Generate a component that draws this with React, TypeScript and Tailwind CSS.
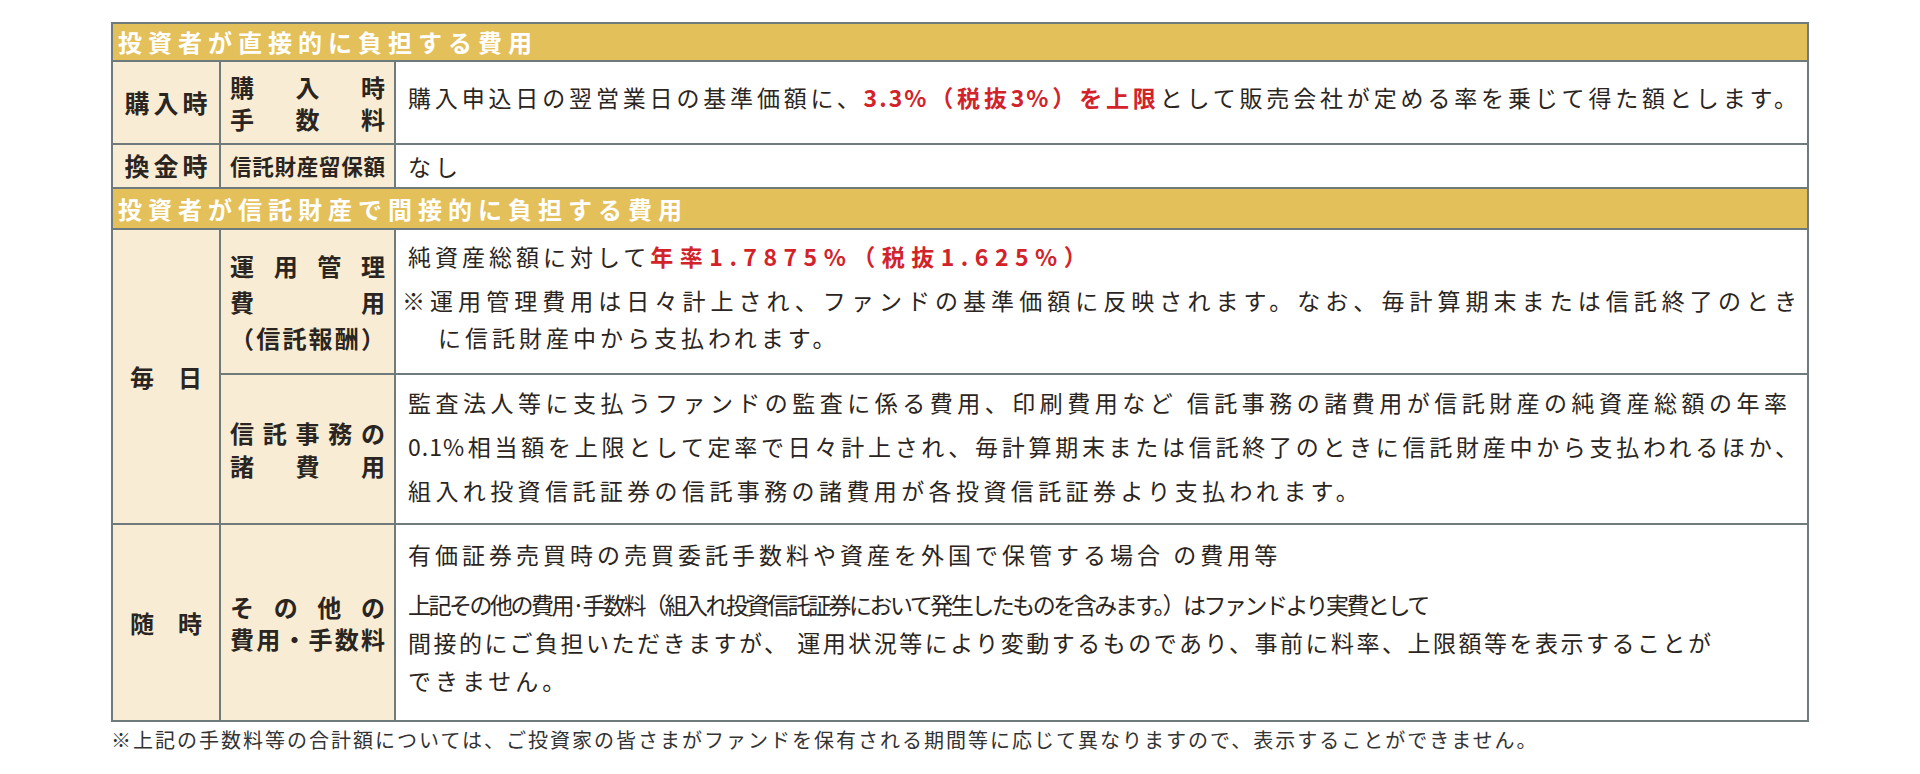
import React from "react"

const font = "font-['Noto_Sans_CJK_JP','Noto_Sans_CJK_SC',sans-serif]"

export default function App() {
  return (
    <div className={`w-[1920px] h-[774px] overflow-hidden bg-white pt-[22px] pl-[111px] text-[#2b2521] ${font}`}>
      <div className="grid w-[1698px] grid-cols-[106px_173px_1fr] grid-rows-[36px_81px_42px_39px_143px_148px_195px] gap-[2px] bg-[#6e7a7b] p-[2px]">
        {/* header 1 */}
        <div className="col-span-3 flex items-center bg-[#e4c05a] pl-[5px] text-[24px] font-semibold tracking-[6px] text-white">
          投資者が直接的に負担する費用
        </div>

        {/* 購入時 */}
        <div className="flex items-center justify-center bg-[#f8edd4] pl-[4px] text-[25px] font-bold tracking-[4px]">購入時</div>
        <div className="flex flex-col justify-center bg-[#f8edd4] px-[9px] text-[24px] font-bold leading-[32px]">
          <div className="text-justify [text-align-last:justify]">購入時</div>
          <div className="text-justify [text-align-last:justify]">手数料</div>
        </div>
        <div className="bg-white pl-[12px] pr-[8px] pt-[17px] text-[23px] leading-[36px]">
          <div className="text-justify tracking-[2px] [text-align-last:justify]">
            購入申込日の翌営業日の基準価額に、
            <span className="font-bold text-[#d2232a]">3.3%（税抜3%）を上限</span>
            として販売会社が定める率を乗じて得た額とします。
          </div>
        </div>

        {/* 換金時 */}
        <div className="flex items-center justify-center bg-[#f8edd4] pl-[4px] text-[25px] font-bold tracking-[4px]">換金時</div>
        <div className="flex items-center bg-[#f8edd4] px-[9px] text-[21.5px] font-bold">
          <div className="w-full text-justify [text-align-last:justify]">信託財産留保額</div>
        </div>
        <div className="flex items-center bg-white pl-[12px] text-[23px] tracking-[4px]">なし</div>

        {/* header 2 */}
        <div className="col-span-3 flex items-center bg-[#e4c05a] pl-[5px] text-[24px] font-semibold tracking-[6px] text-white">
          投資者が信託財産で間接的に負担する費用
        </div>

        {/* 毎日 */}
        <div className="row-span-2 flex items-center justify-center bg-[#f8edd4] text-[24px] font-bold">毎　日</div>
        <div className="flex flex-col justify-center bg-[#f8edd4] px-[9px] text-[24px] font-bold leading-[36px]">
          <div className="text-justify [text-align-last:justify]">運用管理</div>
          <div className="text-justify [text-align-last:justify]">費用</div>
          <div className="text-justify [text-align-last:justify]">（信託報酬）</div>
        </div>
        <div className="bg-white pl-[12px] pr-[8px] pt-[8px] text-[23px] leading-[37px]">
          <div className="whitespace-nowrap tracking-[4px]">
            純資産総額に対して
            <span className="font-bold tracking-[6.5px] text-[#d2232a]">年率1.7875%（税抜1.625%）</span>
          </div>
          <div className="mt-[7px] -ml-[6px] text-justify tracking-[2px] [text-align-last:justify]">
            ※運用管理費用は日々計上され、ファンドの基準価額に反映されます。なお、毎計算期末または信託終了のとき
          </div>
          <div className="whitespace-nowrap pl-[30px] tracking-[4px]">に信託財産中から支払われます。</div>
        </div>

        <div className="flex flex-col justify-center bg-[#f8edd4] px-[9px] text-[24px] font-bold leading-[33px]">
          <div className="text-justify [text-align-last:justify]">信託事務の</div>
          <div className="text-justify [text-align-last:justify]">諸費用</div>
        </div>
        <div className="bg-white pl-[12px] pr-[8px] pt-[5px] text-[23px] leading-[44px]">
          <div className="pr-[10px] text-justify tracking-[2px] [text-align-last:justify]">
            監査法人等に支払うファンドの監査に係る費用、印刷費用など 信託事務の諸費用が信託財産の純資産総額の年率
          </div>
          <div className="text-justify tracking-[1px] [text-align-last:justify]">
            0.1%相当額を上限として定率で日々計上され、毎計算期末または信託終了のときに信託財産中から支払われるほか、
          </div>
          <div className="whitespace-nowrap tracking-[4.4px]">
            組入れ投資信託証券の信託事務の諸費用が各投資信託証券より支払われます。
          </div>
        </div>

        {/* 随時 */}
        <div className="flex items-center justify-center bg-[#f8edd4] text-[24px] font-bold">随　時</div>
        <div className="flex flex-col justify-center bg-[#f8edd4] px-[9px] text-[24px] font-bold leading-[32px]">
          <div className="text-justify [text-align-last:justify]">その他の</div>
          <div className="text-justify [text-align-last:justify]">費用・手数料</div>
        </div>
        <div className="bg-white pl-[12px] pr-[8px] pt-[10px] text-[23px] leading-[38px]">
          <div className="whitespace-nowrap tracking-[4px]">
            有価証券売買時の売買委託手数料や資産を外国で保管する場合 の費用等
          </div>
          <div className="mt-[12px] whitespace-nowrap tracking-[-2.5px]">
            上記その他の費用·手数料（組入れ投資信託証券において発生したものを含みます。）はファンドより実費として
          </div>
          <div className="whitespace-nowrap tracking-[2.5px]">
            間接的にご負担いただきますが、 運用状況等により変動するものであり、事前に料率、上限額等を表示することが
          </div>
          <div className="whitespace-nowrap tracking-[4px]">できません。</div>
        </div>
      </div>

      <div className="mt-[6px] whitespace-nowrap text-[20px] leading-[24px] tracking-[2px] text-[#333]">
        ※上記の手数料等の合計額については、ご投資家の皆さまがファンドを保有される期間等に応じて異なりますので、表示することができません。
      </div>
    </div>
  )
}
